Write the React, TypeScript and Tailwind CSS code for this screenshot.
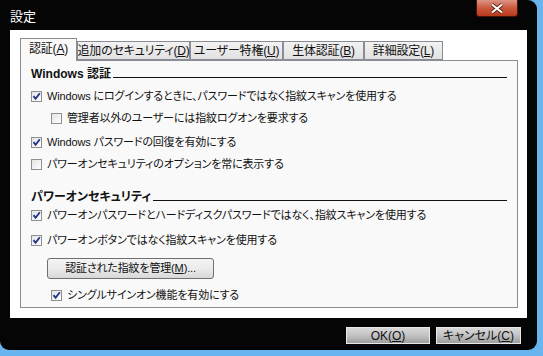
import React from 'react';

const FONT = { fontFamily: '"Liberation Sans", "Noto Sans CJK JP", sans-serif', fontFeatureSettings: '"palt"' };

function Check({ checked }: { checked: boolean }) {
  return (
    <span className="w-[11px] h-[11px] border border-[#8f8f8f] bg-gradient-to-br from-[#dcdcdc] to-[#fafafa] flex items-center justify-center shrink-0">
      <span className="w-[9px] h-[9px] bg-gradient-to-br from-[#e4e4e4] to-[#ffffff] flex items-center justify-center">
        {checked && (
          <svg width="9" height="9" viewBox="0 0 9 9">
            <path d="M1.5 4.2 L3.6 6.8 L7.8 1.2" fill="none" stroke="#24358c" strokeWidth="1.9" />
          </svg>
        )}
      </span>
    </span>
  );
}

function Row({ checked, label, indent = false, className = '' }: { checked: boolean; label: string; indent?: boolean; className?: string }) {
  return (
    <div className={`h-[20px] flex items-center gap-[5px] ${indent ? 'pl-[20px]' : ''} ${className}`}>
      <Check checked={checked} />
      <span className="text-[11px] tracking-[-0.15px] text-[#111] whitespace-nowrap">{label}</span>
    </div>
  );
}

function Heading({ text, className = '' }: { text: string; className?: string }) {
  return (
    <div className={`h-[16px] flex items-center gap-[2px] pr-[10px] ${className}`}>
      <span className="text-[12px] font-bold text-[#111] whitespace-nowrap">{text}</span>
      <span className="flex-1 h-px bg-[#111] mt-[6px]" />
    </div>
  );
}

function Tab({ label, hot, width, active = false }: { label: string; hot: string; width: string; active?: boolean }) {
  return (
    <div
      className={`${width} flex items-center justify-center text-[12px] tracking-[-0.2px] text-[#111] whitespace-nowrap border-l border-t border-r border-[#898c95] ${
        active ? 'h-[23px] bg-[#f9f9f9] relative z-10 -mb-px pb-[2px]' : 'h-[19px] bg-gradient-to-b from-[#f2f2f2] to-[#e1e1e1] border-b'
      }`}
    >
      {label}(<u>{hot}</u>)
    </div>
  );
}

export default function App() {
  return (
    <div className="w-[543px] h-[356px] bg-[#68b4ee] overflow-hidden" style={FONT}>
      <div className="w-[537px] h-[350px] bg-[#050505] rounded-tr-[9px] rounded-br-[9px] rounded-bl-[9px] flex flex-col">
        <div className="h-[30px] flex items-start justify-between">
          <span className="pl-[10px] pt-[7px] text-[13px] text-white">設定</span>
          <div className="mr-[19px] w-[42px] h-[17px] rounded-b-[3px] border border-[#4a1208] border-t-0 bg-gradient-to-b from-[#dc9485] via-[#c9583d] to-[#b8391a] flex items-center justify-center">
            <svg width="14" height="11" viewBox="0 0 14 11">
              <path d="M2 1.5 L12 9.5 M12 1.5 L2 9.5" stroke="#5a2015" strokeWidth="3.6" />
              <path d="M2 1.5 L12 9.5 M12 1.5 L2 9.5" stroke="#ffffff" strokeWidth="2" />
            </svg>
          </div>
        </div>

        <div className="ml-[10px] w-[517px] h-[288px] bg-white pt-[8px] pl-[10px] pr-[9px] flex flex-col">
          <div className="flex items-end">
            <Tab label="認証" hot="A" width="w-[57px]" active />
            <Tab label="追加のセキュリティ" hot="D" width="w-[113px]" />
            <Tab label="ユーザー特権" hot="U" width="w-[93px]" />
            <Tab label="生体認証" hot="B" width="w-[81px]" />
            <Tab label="詳細設定" hot="L" width="w-[79px]" />
          </div>
          <div className="h-[248px] border border-[#898c95] bg-[#f9f9f9] pl-[10px] pt-[5px] flex flex-col">
            <Heading text="Windows 認証" />
            <Row checked label="Windows にログインするときに、パスワードではなく指紋スキャンを使用する" className="mt-[4px]" />
            <Row checked={false} indent label="管理者以外のユーザーには指紋ログオンを要求する" className="mt-[2px]" />
            <Row checked label="Windows パスワードの回復を有効にする" className="mt-[4px]" />
            <Row checked={false} label="パワーオンセキュリティのオプションを常に表示する" className="mt-[2px]" />
            <Heading text="パワーオンセキュリティ" className="mt-[15px]" />
            <Row checked label="パワーオンパスワードとハードディスクパスワードではなく、指紋スキャンを使用する" />
            <Row checked label="パワーオンボタンではなく指紋スキャンを使用する" className="mt-[5px]" />
            <div className="mt-[5px] pl-[16px]">
              <button className="w-[167px] h-[21px] rounded-[3px] border border-[#707070] bg-gradient-to-b from-[#f4f4f4] via-[#ebebeb] to-[#d8d8d8] text-[11px] tracking-[-0.15px] text-[#111]">
                認証された指紋を管理(<u>M</u>)...
              </button>
            </div>
            <Row checked indent label="シングルサインオン機能を有効にする" className="mt-[6px]" />
          </div>
        </div>

        <div className="flex justify-end gap-[6px] pr-[16px] pt-[9px]">
          <button className="w-[84px] h-[17px] border border-[#e8e8e8] bg-gradient-to-b from-[#d8d8d8] via-[#c2c2c2] to-[#9e9e9e] text-[12px] leading-none text-[#111]">
            OK(<u>O</u>)
          </button>
          <button className="w-[85px] h-[17px] border border-[#e8e8e8] bg-gradient-to-b from-[#d8d8d8] via-[#c2c2c2] to-[#9e9e9e] text-[12px] leading-none text-[#111]">
            キャンセル(<u>C</u>)
          </button>
        </div>
      </div>
    </div>
  );
}
